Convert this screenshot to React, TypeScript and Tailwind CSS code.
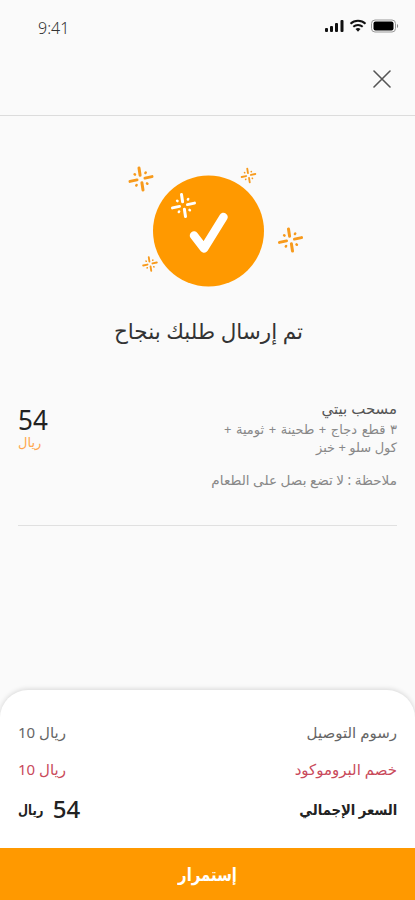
import React from 'react';

const SPARK_LONG = 'M-2-11-.9-3.800M11-2.400 4-.9M2 11 .9 3.800M-11 2.400-4 .9';
const SPARK_SHORT = 'M4.400-6 4.700-6.400M6 4.400 6.400 4.700M-4.400 6-4.700 6.400M-6-4.400-6.400-4.700';

interface SparkProps {
  x: number;
  y: number;
  scale?: number;
  color?: string;
}

const Spark: React.FC<SparkProps> = ({ x, y, scale = 1, color = '#f79a1c' }) => (
  <g transform={`translate(${x} ${y}) scale(${scale})`} stroke={color} strokeLinecap="round" fill="none">
    <path d={SPARK_LONG} strokeWidth="3" />
    <path d={SPARK_SHORT} strokeWidth="2.5" />
  </g>
);

const StatusBar: React.FC = () => (
  <div className="flex h-14 items-start justify-between pl-[38px] pr-[15px] pt-[18px]">
    <span className="text-[16px] font-light leading-5 text-[#333]">9:41</span>
    <svg width="76" height="16" viewBox="0 0 76 16">
      <g fill="#111">
        <rect x="1" y="10" width="3" height="4" rx="1" />
        <rect x="6" y="8" width="3" height="6" rx="1" />
        <rect x="11" y="5" width="3" height="9" rx="1" />
        <rect x="16.500" y="2" width="3" height="12" rx="1" />
      </g>
      <g fill="none" stroke="#111" strokeWidth="2">
        <path d="M26.500 5.700a11 11 0 0 1 15 0" />
        <path d="M29.300 8.700a7 7 0 0 1 9.400 0" />
      </g>
      <path d="M31.500 11a4 4 0 0 1 5 0L34 13.700z" fill="#111" />
      <rect x="47.500" y="2" width="24" height="12" rx="3.500" fill="none" stroke="#999" />
      <rect x="49.500" y="3.500" width="20" height="9" rx="2" fill="#000" />
      <path d="M73 6v4c1.500-.6 1.500-3.400 0-4z" fill="#888" />
    </svg>
  </div>
);

const SuccessMark: React.FC = () => (
  <svg width="190" height="130" viewBox="113 160 190 130" className="mx-auto">
    <circle cx="208.500" cy="231" r="55.500" fill="#ff9900" />
    <path d="M194 235.500 204 248.500 223.500 217" fill="none" stroke="#fff" strokeWidth="8.500" strokeLinecap="round" strokeLinejoin="round" />
    <Spark x={141} y={179} />
    <Spark x={183.5} y={205.5} color="#fff" />
    <Spark x={290.5} y={240} />
    <Spark x={248.5} y={175.5} scale={0.62} />
    <Spark x={150} y={264} scale={0.62} />
  </svg>
);

export default function App() {
  return (
    <div
      dir="rtl"
      className="flex h-[900px] w-[415px] flex-col overflow-hidden bg-[#fafafa] font-['Noto_Sans','DejaVu_Sans',sans-serif]"
    >
      <header className="h-[116px] border-b border-[#dcdcdc]" dir="ltr">
        <StatusBar />
        <div className="flex justify-end pr-6 pt-[14px]">
          <svg width="18" height="18" viewBox="0 0 18 18" stroke="#555" strokeWidth="1.6" strokeLinecap="round">
            <path d="M1 1 17 17M17 1 1 17" />
          </svg>
        </div>
      </header>

      <main className="flex flex-1 flex-col px-[18px]">
        <div className="flex pt-11">
          <SuccessMark />
        </div>
        <h1 className="mt-[25px] pl-[2px] text-center text-[21.5px] leading-8 text-[#333]">تم إرسال طلبك بنجاح</h1>

        <section className="mt-[49px] flex h-[130px] justify-between border-b border-[#e0e0e0]">
          <div className="text-[13px] leading-[18px] text-[#888]">
            <h2 className="text-[15px] leading-[24px] text-[#555]">مسحب بيتي</h2>
            <p className="[word-spacing:1.2px]">٣ قطع دجاج + طحينة + ثومية +</p>
            <p>كول سلو + خبز</p>
            <p className="mt-[15px] text-[13.6px]">ملاحظة : لا تضع بصل على الطعام</p>
          </div>
          <div className="flex flex-col items-end pt-[7px]">
            <span className="origin-left scale-x-[0.93] text-[28px] leading-[32px] text-[#222]">54</span>
            <span className="text-[13px] leading-[14px] text-[#ffa64d]">ريال</span>
          </div>
        </section>
      </main>

      <footer className="shrink-0">
        <div className="flex h-[158px] flex-col rounded-t-[28px] bg-white px-[18px] pt-6 text-[15px] shadow-[0_-1px_5px_rgba(0,0,0,0.14)]">
          <div className="flex h-[37px] items-center justify-between text-[#666]">
            <span>رسوم التوصيل</span>
            <span>ريال 10</span>
          </div>
          <div className="flex h-[37px] items-center justify-between text-[#c94a5b]">
            <span>خصم البروموكود</span>
            <span>ريال 10</span>
          </div>
          <div className="flex h-[42px] items-center justify-between font-semibold text-[#222]">
            <span className="origin-right scale-x-[0.88]">السعر الإجمالي</span>
            <span className="flex items-center gap-1">
              <span className="text-[24px] font-medium">54</span>
              <span className="origin-left scale-x-[0.83] text-[14px]">ريال</span>
            </span>
          </div>
        </div>
        <button className="block h-[52px] w-full bg-[#ff9900] text-[18px] font-semibold text-white">
          <span className="inline-block scale-x-[0.83]">إستمرار</span>
        </button>
      </footer>
    </div>
  );
}
